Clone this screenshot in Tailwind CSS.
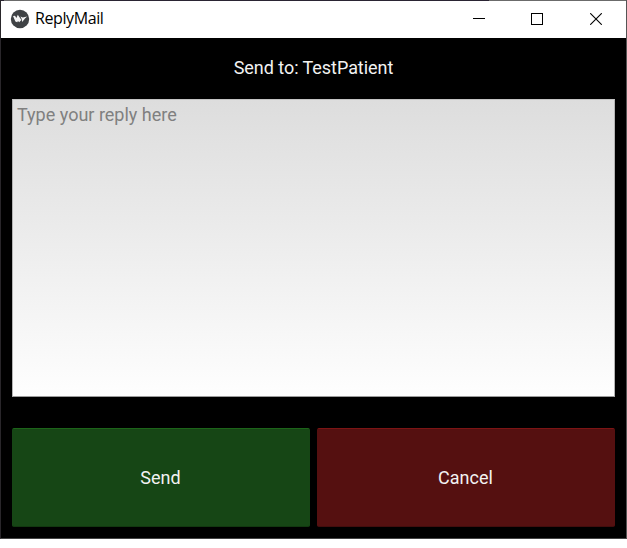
<!DOCTYPE html>
<html lang="en">
<head>
<meta charset="utf-8">
<title>ReplyMail</title>
<script src="https://cdn.jsdelivr.net/npm/@tailwindcss/browser@4"></script>
</head>
<body class="bg-white overflow-hidden">
<div class="w-[627px] h-[539px] flex flex-col bg-black border-x border-b border-l-[#29262a] border-r-[#555555] border-b-[#444444] font-['Roboto',sans-serif] text-lg leading-6 text-[#f2f2f2]">
  <div class="h-px flex shrink-0">
    <div class="w-[3px] bg-[#2a2433]"></div>
    <div class="w-9 bg-[#6b6b6b]"></div>
    <div class="w-[449px] bg-[#2a2433]"></div>
    <div class="flex-1 bg-[#6b6b6b]"></div>
  </div>
  <header class="h-[37px] shrink-0 bg-white flex items-center pl-[9px] text-black">
    <svg class="w-5 h-[21px] pb-px shrink-0" viewBox="0 0 20 20">
      <circle cx="10" cy="10" r="9.2" fill="#3f4245"/>
      <path d="M3 7 L5 6.8 L6.4 9 L7.8 5.8 L11.4 11 L9.2 13.2 L8 12 L7.2 13.2 L5.4 12.6 Z M10.4 7.6 L12.8 8.6 L17.2 7.4 L15.2 9.2 L12.2 13 L11.7 10 Z" fill="#f5f5f5"/>
    </svg>
    <h1 class="ml-[5px] pb-[3px] font-['Open_Sans',sans-serif] text-base leading-5 tracking-[-0.4px]">ReplyMail</h1>
    <div class="ml-auto flex items-center h-full">
      <div class="w-[58px] flex justify-center"><svg width="12" height="12" viewBox="0 0 12 12" shape-rendering="crispEdges"><path d="M0 4.5H12" stroke="#000"/></svg></div>
      <div class="w-[58px] h-full pt-3 flex justify-center"><svg width="12" height="12" viewBox="0 0 12 12" shape-rendering="crispEdges"><rect x=".5" y=".5" width="11" height="11" fill="none" stroke="#000"/></svg></div>
      <div class="w-[60px] h-full pt-3 flex justify-center"><svg width="12" height="12" viewBox="0 0 12 12"><path d="M.2 .2L11.8 11.8M11.8 .2L.2 11.8" stroke="#000" stroke-width="1.1"/></svg></div>
    </div>
  </header>
  <main class="flex-1 flex flex-col px-[11px] pb-3">
    <div class="h-[61px] shrink-0 pb-0.5 flex items-center justify-center tracking-[-0.05px]">Send to: TestPatient</div>
    <div class="h-[298px] w-[603px] shrink-0 border border-t-[#c4c4c4] border-x-[#b4b4b4] border-b-[#9c9c9c] bg-linear-to-b from-[#dddddd] to-[#fefefe] pl-1 pt-[3px] text-[#808080]">Type your reply here</div>
    <div class="mt-[31px] h-[99px] flex gap-[7px]">
      <div class="w-[298px] pr-px rounded-[2px] bg-[#164615] border border-t-[#1c6419] border-x-[#164615] border-b-[#123810] flex items-center justify-center">Send</div>
      <div class="w-[298px] pr-px rounded-[2px] bg-[#551010] border border-t-[#7c1414] border-x-[#551010] border-b-[#430d0d] flex items-center justify-center">Cancel</div>
    </div>
  </main>
</div>
</body>
</html>
